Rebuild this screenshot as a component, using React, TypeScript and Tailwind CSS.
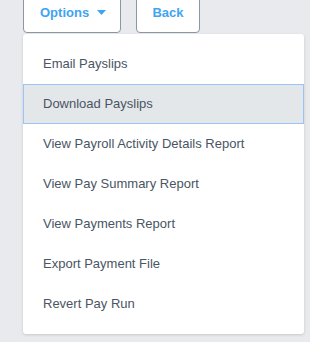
const items = [
    "Email Payslips",
    "Download Payslips",
    "View Payroll Activity Details Report",
    "View Pay Summary Report",
    "View Payments Report",
    "Export Payment File",
    "Revert Pay Run",
];

const App = () => {
    return (
        <div className="h-[342px] w-[310px] overflow-hidden bg-[#e9eaed] font-['Liberation_Sans',Arial,sans-serif]">
            <div className="ml-[23px] flex gap-[15px]">
                <button className="-mt-2 flex h-[41px] w-[98px] items-center rounded-b-[4px] border border-[#8d97a2] bg-white pl-4 text-[13px] font-bold text-[#3fa4f2]">
                    Options
                    <svg className="ml-[8px]" width="9" height="5" viewBox="0 0 9 5">
                        <path d="M0 0 L9 0 L4.5 5 Z" fill="#3fa4f2" />
                    </svg>
                </button>
                <button className="-mt-2 flex h-[41px] w-[64px] items-center justify-center rounded-b-[4px] border border-[#8d97a2] bg-white text-[13px] font-bold text-[#3fa4f2]">
                    Back
                </button>
            </div>
            <div className="ml-[23px] mt-px w-[281px] rounded-[3px] bg-white py-[10px] shadow-[0_1px_3px_rgba(0,0,0,0.15)]">
                {items.map((item, i) => (
                    <div
                        key={item}
                        className={
                            i === 1
                                ? "flex h-10 items-center border border-[#9dc2f5] bg-[#e4e7ea] pl-[19px] text-[13px] text-[#4a5564]"
                                : "flex h-10 items-center pl-5 text-[13px] text-[#4a5564]"
                        }
                    >
                        {item}
                    </div>
                ))}
            </div>
        </div>
    );
};

export default App;
